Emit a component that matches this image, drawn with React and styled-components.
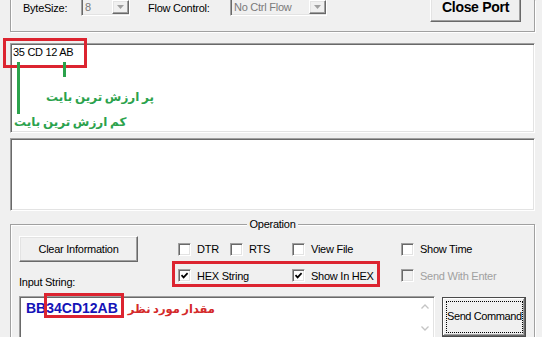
import React from "react";
import styled, { createGlobalStyle, css } from "styled-components";

const Global = createGlobalStyle`
  * { box-sizing: border-box; }
  body { margin: 0; font-family: "Liberation Sans", Arial, sans-serif; font-size: 11px; color: #000; }
`;

const sunken = css`
  border: 1px solid;
  border-color: #a0a0a0 #fff #fff #a0a0a0;
  box-shadow: inset 1px 1px 0 #696969, inset -1px -1px 0 #e3e3e3;
`;

const raised = css`
  border: 1px solid;
  border-color: #fff #696969 #696969 #fff;
  box-shadow: inset -1px -1px 0 #a0a0a0, inset 1px 1px 0 #e3e3e3;
  background: #f0f0f0;
`;

const Page = styled.div`
  width: 542px;
  height: 337px;
  overflow: hidden;
  background: #f0f0f0;
  padding: 0 7px 0 10px;
  display: flex;
  flex-direction: column;
  letter-spacing: -0.25px;
`;

const TopGroup = styled.div`
  flex-shrink: 0;
  height: 32px;
  display: flex;
  align-items: flex-start;
  border: 1px solid #a0a0a0;
  border-top: none;
  box-shadow: inset 1px 0 0 #fff, 1px 1px 0 #fff;
`;

const Label = styled.span`
  width: ${(p) => p.$w}px;
  margin-left: ${(p) => p.$ml}px;
  margin-top: 1px;
  line-height: 14px;
  white-space: nowrap;
`;

const Combo = styled.div`
  ${sunken};
  width: ${(p) => p.$w}px;
  height: 18px;
  margin-top: -2px;
  background: #f0f0f0;
  display: flex;
  align-items: stretch;
  padding: 1px 0 1px 1px;
`;

const ComboValue = styled.span`
  flex: 1;
  padding-left: 2px;
  line-height: 14px;
  color: #7a7a7a;
  white-space: nowrap;
  overflow: hidden;
`;

const ComboArrow = styled.span`
  ${raised};
  width: 17px;
  display: flex;
  align-items: center;
  justify-content: center;
`;

const ClosePortBtn = styled.button`
  ${raised};
  margin: -8px 13px 0 auto;
  width: 91px;
  height: 30px;
  padding: 0;
  font-family: "Liberation Sans", Arial, sans-serif;
  font-weight: bold;
  font-size: 14px;
  line-height: 16px;
  letter-spacing: -0.3px;
  color: #000;
`;

const EditBox = styled.div`
  ${sunken};
  flex-shrink: 0;
  position: relative;
  background: #fff;
  height: ${(p) => p.$h}px;
  margin-top: ${(p) => p.$mt}px;
  padding: 2px 2px;
`;

const HexLine = styled.div`
  line-height: 13px;
  letter-spacing: -0.3px;
  white-space: nowrap;
`;

const RedFrame = styled.div`
  position: absolute;
  border: 3px solid #dc2430;
  left: ${(p) => p.$l}px;
  top: ${(p) => p.$t}px;
  width: ${(p) => p.$w}px;
  height: ${(p) => p.$h}px;
  pointer-events: none;
`;

const GreenLine = styled.div`
  position: absolute;
  width: 3px;
  background: #2ba24c;
  left: ${(p) => p.$l}px;
  top: ${(p) => p.$t}px;
  height: ${(p) => p.$h}px;
`;

const GreenNote = styled.div`
  position: absolute;
  left: ${(p) => p.$l}px;
  top: ${(p) => p.$t}px;
  direction: rtl;
  font-family: "DejaVu Sans", sans-serif;
  font-weight: bold;
  font-size: 12px;
  line-height: 16px;
  letter-spacing: 0;
  word-spacing: -1.5px;
  color: #2ba24c;
  white-space: nowrap;
`;

const Operation = styled.fieldset`
  flex-shrink: 0;
  min-width: 0;
  margin: 6px 0 0;
  padding: 5px 8px 0 8px;
  height: 200px;
  border: 1px solid #a0a0a0;
  box-shadow: inset 1px 1px 0 #fff, 1px 1px 0 #fff;
`;

const Legend = styled.legend`
  margin: 0 auto;
  padding: 0 2px;
  line-height: 14px;
  background: #f0f0f0;
`;

const Grid = styled.div`
  position: relative;
  display: grid;
  grid-template-columns: 159px 52px 62px 109px 1fr;
  grid-template-rows: 26px 27px;
`;

const ClearBtn = styled.button`
  ${raised};
  grid-column: 1;
  grid-row: 1;
  width: 119px;
  height: 26px;
  padding: 0;
  font-family: "Liberation Sans", Arial, sans-serif;
  font-size: 11px;
  letter-spacing: -0.25px;
  color: #000;
`;

const FieldLabel = styled.span`
  grid-column: 1;
  grid-row: 2;
  align-self: end;
  line-height: 14px;
`;

const CheckItem = styled.label`
  grid-column: ${(p) => p.$col} / span ${(p) => p.$span || 1};
  grid-row: ${(p) => p.$row};
  align-self: center;
  display: flex;
  align-items: center;
  gap: 6px;
  height: 13px;
  white-space: nowrap;
  color: ${(p) => (p.$disabled ? "#a0a0a0" : "#000")};
`;

const Box = styled.span`
  ${sunken};
  width: 13px;
  height: 13px;
  flex-shrink: 0;
  background: ${(p) => (p.$disabled ? "#f0f0f0" : "#fff")};
  display: flex;
  align-items: center;
  justify-content: center;
`;

const BottomRow = styled.div`
  display: flex;
  align-items: flex-start;
  margin-top: 7px;
`;

const InputBox = styled.div`
  ${sunken};
  position: relative;
  width: 416px;
  height: 43px;
  background: #fff;
  display: flex;
  padding: 1px;
`;

const InputText = styled.div`
  flex: 1;
  padding: 2px 0 0 5px;
  white-space: nowrap;
  line-height: 16px;
`;

const HexInput = styled.span`
  font-weight: bold;
  font-size: 14px;
  letter-spacing: 0;
  color: #1414b8;
`;

const RedNote = styled.span`
  margin-left: 10px;
  font-family: "DejaVu Sans", sans-serif;
  font-weight: bold;
  font-size: 11.5px;
  letter-spacing: 0;
  word-spacing: -1.5px;
  color: #d42a2a;
`;

const ScrollCol = styled.div`
  width: 17px;
  display: flex;
  flex-direction: column;
  justify-content: space-between;
`;

const ScrollArrow = styled.span`
  height: 17px;
  display: flex;
  align-items: center;
  justify-content: center;
`;

const SendBtn = styled.button`
  margin: 1px 0 0 7px;
  width: 84px;
  height: 40px;
  padding: 3px;
  border: 1px solid #4a4a4a;
  box-shadow: inset -1px -1px 0 #696969, inset 1px 1px 0 #fff, inset -2px -2px 0 #a0a0a0;
  background: #f0f0f0;
  font-family: "Liberation Sans", Arial, sans-serif;
  font-size: 11px;
  letter-spacing: -0.4px;
  color: #000;
  display: flex;
  white-space: nowrap;
`;

const FocusRect = styled.span`
  flex: 1;
  border: 1px dotted #000;
  display: flex;
  align-items: center;
  justify-content: center;
  padding-bottom: 3px;
  white-space: nowrap;
  overflow: visible;
`;

const Tri = () => (
  <svg width="7" height="4" viewBox="0 0 7 4">
    <path d="M0 0 H7 L3.5 4 Z" fill="#a0a0a0" />
  </svg>
);

const Tick = () => (
  <svg width="9" height="9" viewBox="0 0 9 9">
    <path d="M1.5 4.2 L3.6 6.4 L7.6 2.2" fill="none" stroke="#000" strokeWidth="1.7" />
  </svg>
);

const Chevron = ({ up }) => (
  <svg width="8" height="5" viewBox="0 0 8 5">
    <path d={up ? "M0.5 4.5 L4 1 L7.5 4.5" : "M0.5 0.5 L4 4 L7.5 0.5"} fill="none" stroke="#c4c4c4" strokeWidth="1.3" />
  </svg>
);

const Check = ({ label, checked, disabled, col, row, span }) => (
  <CheckItem $col={col} $row={row} $span={span} $disabled={disabled}>
    <Box $disabled={disabled}>{checked && <Tick />}</Box>
    {label}
  </CheckItem>
);

export default function App() {
  return (
    <>
      <Global />
      <Page>
        <TopGroup>
          <Label $w={58} $ml={12}>ByteSize:</Label>
          <Combo $w={49}>
            <ComboValue>8</ComboValue>
            <ComboArrow><Tri /></ComboArrow>
          </Combo>
          <Label $w={82} $ml={18}>Flow Control:</Label>
          <Combo $w={97}>
            <ComboValue>No Ctrl Flow</ComboValue>
            <ComboArrow><Tri /></ComboArrow>
          </Combo>
          <ClosePortBtn>Close Port</ClosePortBtn>
        </TopGroup>

        <EditBox $h={90} $mt={11}>
          <HexLine>35 CD 12 AB</HexLine>
          <RedFrame $l={-8} $t={-6} $w={84} $h={30} />
          <GreenLine $l={6} $t={18} $h={52} />
          <GreenLine $l={52} $t={18} $h={15} />
          <GreenNote $l={35} $t={45}>پر ارزش ترین بایت</GreenNote>
          <GreenNote $l={3} $t={70}>کم ارزش ترین بایت</GreenNote>
        </EditBox>

        <EditBox $h={73} $mt={5} />

        <Operation>
          <Legend>Operation</Legend>
          <Grid>
            <ClearBtn>Clear Information</ClearBtn>
            <Check label="DTR" col={2} row={1} />
            <Check label="RTS" col={3} row={1} />
            <Check label="View File" col={4} row={1} />
            <Check label="Show Time" col={5} row={1} />
            <FieldLabel>Input String:</FieldLabel>
            <Check label="HEX String" checked col={2} row={2} span={2} />
            <Check label="Show In HEX" checked col={4} row={2} />
            <Check label="Send With Enter" disabled col={5} row={2} />
            <RedFrame $l={153} $t={25} $w={208} $h={26} />
          </Grid>
          <BottomRow>
            <InputBox>
              <InputText>
                <HexInput>BB34CD12AB</HexInput>
                <RedNote>مقدار مورد نظر</RedNote>
              </InputText>
              <ScrollCol>
                <ScrollArrow><Chevron up /></ScrollArrow>
                <ScrollArrow><Chevron /></ScrollArrow>
              </ScrollCol>
              <RedFrame $l={24} $t={-4} $w={80} $h={25} />
            </InputBox>
            <SendBtn>
              <FocusRect>Send Command</FocusRect>
            </SendBtn>
          </BottomRow>
        </Operation>
      </Page>
    </>
  );
}
